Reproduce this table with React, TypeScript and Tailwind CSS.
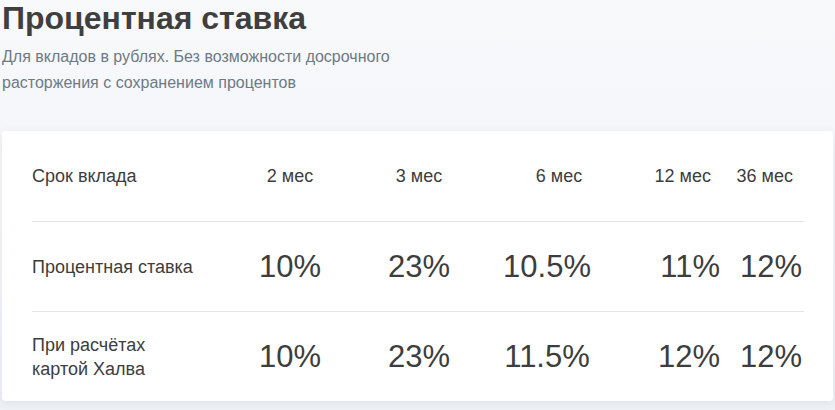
import React from 'react';

const terms = ['2 мес', '3 мес', '6 мес', '12 мес', '36 мес'];

const rows = [
  { label: ['Процентная ставка'], values: ['10%', '23%', '10.5%', '11%', '12%'] },
  { label: ['При расчётах', 'картой Халва'], values: ['10%', '23%', '11.5%', '12%', '12%'] },
];

// per-column alignment: header cells sit a little off the value cells
const headCls = ['text-center', 'text-center', 'text-center pl-6', 'text-right pr-[9px]', 'text-right pr-[9px]'];
const valCls = ['text-center', 'text-center', 'text-center', 'text-right', 'text-right'];

const grid = 'grid grid-cols-[193px_130px_128px_128px_109px_82px] items-center whitespace-nowrap';

export default function App() {
  return (
    <div
      className="w-[835px] h-[410px] overflow-hidden bg-gradient-to-b from-[#f8f9fb] to-[#eef1f5] text-[#3d3d3d]"
      style={{ fontFamily: '"Liberation Sans", Arial, sans-serif' }}
    >
      <div className="pl-[2px]">
        <h1 className="text-[32px] leading-[36px] font-bold text-[#3f3f3f]">Процентная ставка</h1>
        <p className="mt-[8px] max-w-[400px] text-[16px] leading-[26px] text-[#6e7a85]">
          Для вкладов в рублях. Без возможности досрочного расторжения с сохранением процентов
        </p>
      </div>

      <div className="mt-[35px] mx-[2px] bg-white rounded-[4px] shadow-[0_2px_10px_rgba(40,60,90,0.08)] px-[30px]">
        <div className={`${grid} h-[90px] text-[18px]`}>
          <div>Срок вклада</div>
          {terms.map((t, i) => (
            <div key={t} className={headCls[i]}>{t}</div>
          ))}
        </div>

        {rows.map((r) => (
          <div key={r.label[0]} className={`${grid} h-[90px] border-t border-[#e3e5e8] w-[772px]`}>
            <div className="text-[18px] leading-[24px]">
              {r.label.map((l) => (
                <div key={l}>{l}</div>
              ))}
            </div>
            {r.values.map((v, i) => (
              <div key={i} className={`text-[31px] leading-none ${valCls[i]}`}>{v}</div>
            ))}
          </div>
        ))}
      </div>
    </div>
  );
}
